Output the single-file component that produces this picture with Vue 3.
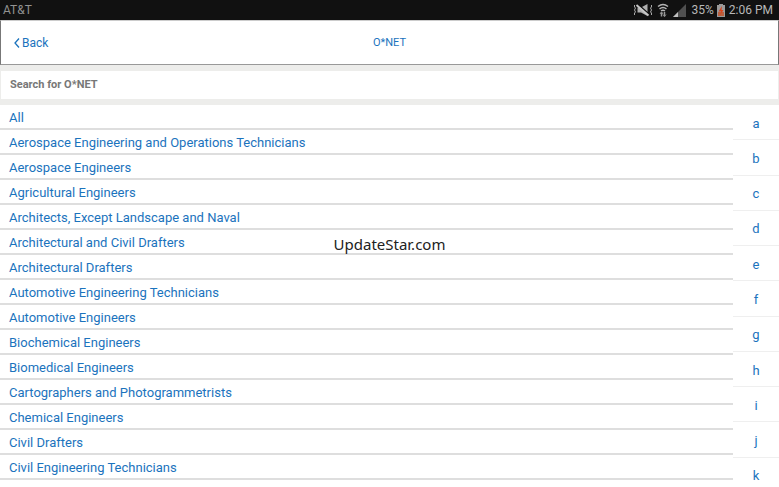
<script setup>
import { ref } from 'vue'

const search = ref('')

const occupations = [
  'All',
  'Aerospace Engineering and Operations Technicians',
  'Aerospace Engineers',
  'Agricultural Engineers',
  'Architects, Except Landscape and Naval',
  'Architectural and Civil Drafters',
  'Architectural Drafters',
  'Automotive Engineering Technicians',
  'Automotive Engineers',
  'Biochemical Engineers',
  'Biomedical Engineers',
  'Cartographers and Photogrammetrists',
  'Chemical Engineers',
  'Civil Drafters',
  'Civil Engineering Technicians',
  'Civil Engineers'
]

const letters = 'abcdefghijk'.split('')
</script>

<template>
  <div class="screen">
    <div class="status-bar">
      <span class="carrier">AT&amp;T</span>
      <div class="status-icons">
        <!-- vibrate / muted -->
        <svg width="20" height="14" viewBox="0 0 20 14" fill="none">
          <path d="M1.500 2v2l1 1-1 2 1 2-1 1v2M18.500 2v2l-1 1 1 2-1 2 1 1v2" stroke="#aaa" />
          <path d="M4.500 4.500H8L14.500 1v12L8 9.500H4.500z" fill="#b0b0b0" />
          <path d="M4 .5L16 11" stroke="#111" stroke-width="1.500" />
          <path d="M3.500 2L15.500 12.500" stroke="#c8c8c8" stroke-width="1.800" />
        </svg>
        <!-- wifi -->
        <svg class="wifi" width="12" height="14" viewBox="0 0 12 14" fill="none">
          <path d="M1 3.500q5-4 10 0M2.500 6q3.500-3 7 0M4 8q2-1.500 4 0" stroke="#b4b4b4" stroke-width="1.500" />
          <path d="M4.500 9v4.500M7.500 9v4.500" stroke="#999" stroke-width="1.500" />
          <path d="M3 11l1.500-2L6 11M6 11.500l1.500 2 1.500-2" stroke="#888" />
        </svg>
        <!-- signal -->
        <svg class="signal" width="13" height="13" viewBox="0 0 13 13">
          <path d="M13 0v13H0z" fill="#505050" />
          <path d="M5 8v5H0z" fill="#c0c0c0" />
        </svg>
        <span class="battery-level">35%</span>
        <!-- battery -->
        <svg class="battery" width="8" height="13" viewBox="0 0 8 13">
          <path d="M2 0h4v1h2v12H0V1h2z" fill="#9a9a9a" />
          <path d="M1 8h6v4H1z" fill="#b9603f" />
          <path d="M5 2L1.500 7.500H4L3 11.500l3.500-5.500H4.500z" fill="#d8431c" />
        </svg>
        <span>2:06 PM</span>
      </div>
    </div>

    <header class="nav-bar">
      <button type="button" class="back">
        <svg width="6" height="10" viewBox="0 0 6 10" fill="none">
          <path d="M5 0.500L1 5l4 4.500" stroke="currentColor" stroke-width="1.300" />
        </svg>
        Back
      </button>
      <h1 class="title">O*NET</h1>
    </header>

    <div class="search">
      <input v-model="search" type="text" placeholder="Search for O*NET" aria-label="Search for O*NET" />
    </div>

    <main class="content">
      <ul class="occupations">
        <li v-for="name in occupations" :key="name">
          <a href="#">{{ name }}</a>
        </li>
      </ul>
      <nav class="index">
        <a v-for="letter in letters" :key="letter" href="#">{{ letter }}</a>
      </nav>
    </main>

    <div class="watermark">UpdateStar.com</div>
  </div>
</template>

<style>
body {
  margin: 0;
  overflow: hidden;
}
</style>

<style scoped>
.screen {
  position: relative;
  display: flex;
  flex-direction: column;
  height: 100vh;
  overflow: hidden;
  background: #fff;
  color: #1b73bd;
  font-family: Roboto, "Liberation Sans", sans-serif;
  font-size: 13px;
}

.status-bar {
  display: flex;
  flex: none;
  align-items: center;
  justify-content: space-between;
  height: 20px;
  padding: 0 6px 0 3px;
  box-sizing: border-box;
  background: #111;
  color: #b8b8b8;
  font-size: 12px;
}

.carrier {
  color: #929292;
}

.status-icons {
  display: flex;
  align-items: center;
}

.wifi {
  margin-left: 4px;
}

.signal {
  margin-left: 4px;
}

.battery-level {
  margin-left: 6px;
}

.battery {
  margin: 0 4px 0 3px;
}

.nav-bar {
  display: grid;
  flex: none;
  grid-template-columns: 1fr auto 1fr;
  align-items: center;
  height: 45px;
  padding: 0 13px;
  box-sizing: border-box;
  border: 1px solid #777;
  border-top-color: #ccc;
  border-bottom-color: #999;
}

.back {
  display: flex;
  align-items: center;
  justify-self: start;
  gap: 2px;
  padding: 0;
  border: 0;
  background: none;
  color: inherit;
  font: inherit;
  font-size: 12px;
  cursor: pointer;
}

.title {
  margin: 0;
  font-size: 11px;
  font-weight: 400;
}

.search {
  flex: none;
  padding: 6px 1px;
  background: #ededeb;
}

.search input {
  display: block;
  width: 100%;
  height: 28px;
  padding: 0 9px 2px;
  box-sizing: border-box;
  border: 0;
  outline: 0;
  background: #fff;
  color: #777;
  font: inherit;
  font-size: 11px;
  font-weight: 700;
}

.search input::placeholder {
  color: #777;
  opacity: 1;
}

.content {
  display: flex;
  flex: 1;
  min-height: 0;
  overflow: hidden;
}

.occupations {
  flex: 1;
  margin: 0;
  padding: 0;
  list-style: none;
}

.occupations li {
  border-bottom: 2px solid #dedede;
}

.occupations a {
  display: block;
  padding: 2px 0 0 9px;
  line-height: 21px;
}

a {
  color: inherit;
  text-decoration: none;
}

.index {
  display: grid;
  flex: none;
  grid-auto-rows: 1fr;
  width: 46px;
  height: 388px;
}

.index a {
  display: flex;
  align-items: center;
  justify-content: center;
  padding-top: 2px;
  border-bottom: 1px solid #efefef;
}

.watermark {
  position: absolute;
  inset: 0;
  display: flex;
  align-items: center;
  justify-content: center;
  color: #222;
  font-family: "Noto Sans", sans-serif;
  font-size: 15px;
  pointer-events: none;
}
</style>
